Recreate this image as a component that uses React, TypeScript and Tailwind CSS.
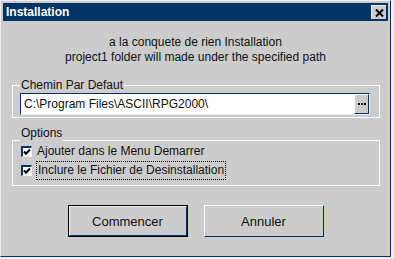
import React from 'react';

const NAVY = 'border-[#003366]';

function Checkbox({ checked }: { checked: boolean }) {
    return (
        <div className="w-[11px] h-[11px] bg-white border-t-2 border-l-2 border-[#003366] border-r border-b border-r-[#eeeeee] border-b-[#eeeeee] flex items-center justify-center shrink-0">
            {checked && (
                <svg width="8" height="8" viewBox="0 0 8 8">
                    <path d="M1 3.5 L3 5.7 L7 1.5" stroke="#000" strokeWidth="2" fill="none" />
                </svg>
            )}
        </div>
    );
}

export default function App() {
    return (
        <div className="w-[394px] h-[259px] bg-[#eeeeee]" style={{ fontFamily: '"Liberation Sans", Arial, sans-serif' }}>
            {/* Window frame */}
            <div className="w-[391px] h-[257px] flex flex-col bg-[#cccccc] border-l border-t border-[#eeeeee] border-r border-b border-r-[#003366] border-b-[#003366] pt-[2px] pl-[2px] pr-[2px]">
                {/* Title bar */}
                <div className="h-[18px] bg-[#003366] flex items-center justify-between pl-[3px] pr-[2px]">
                    <span className="text-white text-[12px] font-bold leading-[14px]">Installation</span>
                    <div className="w-[15px] h-[14px] bg-[#cccccc] border-t border-l border-[#eeeeee] flex items-center justify-center">
                        <svg width="9" height="8" viewBox="0 0 9 8">
                            <path d="M1 0.5 L8 7.5 M8 0.5 L1 7.5" stroke="#000" strokeWidth="2" fill="none" />
                        </svg>
                    </div>
                </div>

                {/* Body */}
                <div className="flex-1 flex flex-col text-[12px] leading-[15px] text-[#111]">
                    <div className="pt-[14px] text-center">
                        <div>a la conquete de rien Installation</div>
                        <div>project1 folder will made under the specified path</div>
                    </div>

                    {/* Chemin Par Defaut */}
                    <div className="mt-[13px] ml-[9px] w-[368px]">
                        <div className="flex h-[14px] leading-[14px]">
                            <div className="w-[8px] mt-[7px] border-t border-l border-white"></div>
                            <span className="px-[1px]">Chemin Par Defaut</span>
                            <div className="flex-1 mt-[7px] border-t border-r border-white"></div>
                        </div>
                        <div className="border-l border-r border-b border-white pl-[7px] pr-[8px] pt-[1px] pb-[2px]">
                            <div className={`h-[22px] w-[350px] bg-white flex border-t border-l ${NAVY} border-r border-b border-r-[#eeeeee] border-b-[#eeeeee]`}>
                                <div className="flex-1 pl-[3px] flex items-center">C:\Program Files\ASCII\RPG2000\</div>
                                <div className="w-[15px] bg-[#cccccc] border-l border-t border-white border-r border-b border-r-[#003366] border-b-[#003366] flex items-center justify-center">
                                    <svg width="8" height="2" viewBox="0 0 8 2">
                                        <rect x="0" y="0" width="2" height="2" fill="#000" />
                                        <rect x="3" y="0" width="2" height="2" fill="#000" />
                                        <rect x="6" y="0" width="2" height="2" fill="#000" />
                                    </svg>
                                </div>
                            </div>
                        </div>
                    </div>

                    {/* Options */}
                    <div className="mt-[8px] ml-[9px] w-[368px]">
                        <div className="flex h-[15px] leading-[14px]">
                            <div className="w-[8px] mt-[14px] border-t border-l border-white"></div>
                            <span className="px-[1px]">Options</span>
                            <div className="flex-1 mt-[14px] border-t border-r border-white"></div>
                        </div>
                        <div className="border-l border-r border-b border-white pl-[8px] pb-[5px]">
                            <div className="h-[20px] flex items-center gap-[5px]">
                                <Checkbox checked />
                                <span>Ajouter dans le Menu Demarrer</span>
                            </div>
                            <div className="h-[19px] flex items-center gap-[4px]">
                                <Checkbox checked />
                                <span className="border border-dotted border-black px-[1px] leading-[17px]">Inclure le Fichier de Desinstallation</span>
                            </div>
                        </div>
                    </div>

                    {/* Buttons */}
                    <div className="mt-[19px] flex justify-center gap-[16px]">
                        <button className="w-[120px] h-[32px] bg-[#cccccc] border border-black flex items-center justify-center text-[13px]">
                            <span className="w-full h-full flex items-center justify-center border-t border-l border-[#eeeeee] border-r border-b border-r-[#003366] border-b-[#003366]">
                                Commencer
                            </span>
                        </button>
                        <button className="w-[120px] h-[32px] bg-[#cccccc] border-t border-l border-white border-r border-b border-r-[#003366] border-b-[#003366] text-[13px]">
                            Annuler
                        </button>
                    </div>
                </div>
            </div>
        </div>
    );
}
